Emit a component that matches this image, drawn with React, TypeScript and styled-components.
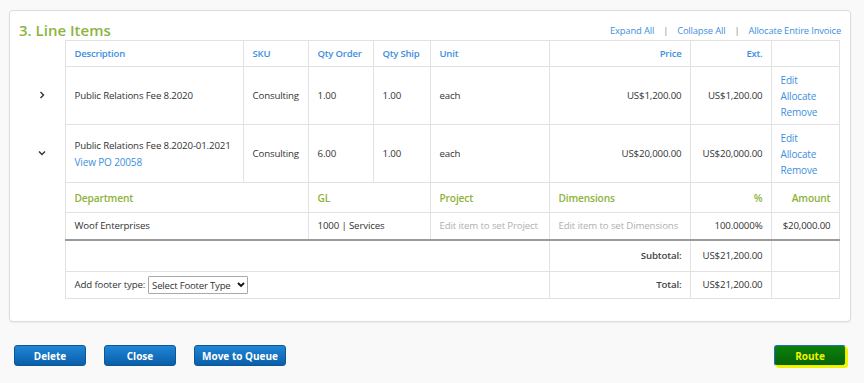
import React from 'react';
import styled, { createGlobalStyle } from 'styled-components';

const GlobalStyle = createGlobalStyle`
  html, body { margin: 0; padding: 0; background: #f9f9f9; }
  body { font-family: "Open Sans", "Liberation Sans", sans-serif; color: #333; }
  * { box-sizing: border-box; }
`;

const Page = styled.div`
  width: 864px;
  height: 383px;
  padding-top: 10px;
`;

const Card = styled.section`
  margin-left: 9px;
  width: 842px;
  height: 312px;
  background: #fff;
  border: 1px solid #dcdcdc;
  border-radius: 4px;
  box-shadow: 0 1px 2px rgba(0, 0, 0, 0.06);
  padding: 0 9px 0 9px;
`;

const TitleBar = styled.div`
  height: 29px;
  display: flex;
  justify-content: space-between;
  align-items: flex-end;
`;

const Title = styled.h2`
  margin: 0;
  font-size: 15px;
  line-height: 20px;
  font-weight: 600;
  color: #8cb43f;
`;

const Links = styled.div`
  display: flex;
  align-items: center;
  gap: 9px;
  font-size: 9.4px;
  line-height: 14px;
  padding-bottom: 2px;
  letter-spacing: -0.15px;
  white-space: nowrap;
`;

const Link = styled.a`
  color: #3d8fe0;
  text-decoration: none;
  cursor: pointer;
`;

const Sep = styled.span`
  color: #888;
`;

const Table = styled.table`
  border-collapse: collapse;
  table-layout: fixed;
  width: 820px;
  font-size: 9.7px;
  letter-spacing: -0.15px;
`;

const Row = styled.tr<{ $h: number; $heavy?: boolean }>`
  height: ${(p) => p.$h}px;
  & > td:not(:first-child), & > th:not(:first-child) {
    border-bottom: ${(p) => (p.$heavy ? '2px solid #9a9a9a' : '1px solid #e2e2e2')};
  }
`;

const Gutter = styled.td`
  border: none;
  padding: 0;
  text-align: center;
  vertical-align: middle;
`;

const HeadCell = styled.th<{ $align?: 'left' | 'right' }>`
  border: 1px solid #e2e2e2;
  padding: 0 8px 0 9px;
  font-size: 9.5px;
  font-weight: 600;
  letter-spacing: -0.2px;
  color: #3d8fe0;
  text-align: ${(p) => p.$align || 'left'};
  vertical-align: middle;
  white-space: nowrap;
  overflow: visible;
`;

const GreenHead = styled.td<{ $align?: 'left' | 'right' }>`
  border: 1px solid #e2e2e2;
  padding: 0 8px 0 9px;
  font-size: 10.2px;
  font-weight: 600;
  letter-spacing: -0.15px;
  color: #8db33a;
  text-align: ${(p) => p.$align || 'left'};
  vertical-align: middle;
  white-space: nowrap;
`;

const Cell = styled.td<{ $align?: 'left' | 'right'; $muted?: boolean; $strong?: boolean }>`
  border: 1px solid #e2e2e2;
  padding: 0 8px 0 9px;
  color: ${(p) => (p.$muted ? '#b0b0b0' : p.$strong ? '#444' : '#333')};
  font-weight: ${(p) => (p.$strong ? 600 : 400)};
  text-align: ${(p) => p.$align || 'left'};
  vertical-align: middle;
  line-height: 16px;
  white-space: nowrap;
  overflow: hidden;
`;

const Stack = styled.div`
  display: flex;
  flex-direction: column;
  line-height: 16px;
`;

const ActionLink = styled.a`
  color: #3d8fe0;
  text-decoration: none;
  font-size: 10px;
  cursor: pointer;
`;

const FooterLabel = styled.label`
  display: flex;
  align-items: center;
  gap: 3px;
  color: #333;
`;

const SelectWrap = styled.span`
  position: relative;
  display: inline-flex;
`;

const Select = styled.select`
  appearance: none;
  height: 18px;
  width: 100px;
  border: 1px solid #a9a9a9;
  border-radius: 1px;
  background: #fff;
  font-family: "Open Sans", "Liberation Sans", sans-serif;
  font-size: 9.6px;
  letter-spacing: -0.2px;
  color: #333;
  padding: 0 12px 0 3px;
`;

const SelectArrow = styled.svg`
  position: absolute;
  right: 3px;
  top: 6px;
  pointer-events: none;
`;

const ButtonBar = styled.div`
  display: flex;
  align-items: center;
  gap: 18px;
  margin-top: 23px;
  padding: 0 18px 0 14px;
`;

const Button = styled.button<{ $w: number }>`
  width: ${(p) => p.$w}px;
  height: 21px;
  border: 1px solid #0b5899;
  border-radius: 3px;
  background: linear-gradient(#1f86d6, #0a5ea8);
  color: #fff;
  font-family: "Open Sans", "Liberation Sans", sans-serif;
  font-weight: 700;
  font-size: 10px;
  padding: 0;
  cursor: pointer;
`;

const RouteButton = styled(Button)`
  margin-left: auto;
  background: linear-gradient(#0c800c, #066406);
  color: #f2f200;
  border-color: #1f6fc4 #e9ef00 #e9ef00 #1f6fc4;
  box-shadow: 2px 2px 0 #f3f300;
`;

const ChevronRight = () => (
  <svg width="8" height="8" viewBox="0 0 8 8">
    <path d="M2.5 1 L5.5 4 L2.5 7" fill="none" stroke="#333" strokeWidth="1.4" />
  </svg>
);

const ChevronDown = () => (
  <svg width="8" height="8" viewBox="0 0 8 8">
    <path d="M1 2.5 L4 5.5 L7 2.5" fill="none" stroke="#333" strokeWidth="1.4" />
  </svg>
);

const Actions = () => (
  <Stack>
    <ActionLink>Edit</ActionLink>
    <ActionLink>Allocate</ActionLink>
    <ActionLink>Remove</ActionLink>
  </Stack>
);

export default function App() {
  return (
    <Page>
      <GlobalStyle />
      <Card>
        <TitleBar>
          <Title>3. Line Items</Title>
          <Links>
            <Link>Expand All</Link>
            <Sep>|</Sep>
            <Link>Collapse All</Link>
            <Sep>|</Sep>
            <Link>Allocate Entire Invoice</Link>
          </Links>
        </TitleBar>
        <Table>
          <colgroup>
            <col style={{ width: 46 }} />
            <col style={{ width: 178 }} />
            <col style={{ width: 65 }} />
            <col style={{ width: 65 }} />
            <col style={{ width: 57 }} />
            <col style={{ width: 119 }} />
            <col style={{ width: 141 }} />
            <col style={{ width: 81 }} />
            <col style={{ width: 68 }} />
          </colgroup>
          <tbody>
            <Row $h={26}>
              <Gutter />
              <HeadCell>Description</HeadCell>
              <HeadCell>SKU</HeadCell>
              <HeadCell>Qty Order</HeadCell>
              <HeadCell>Qty Ship</HeadCell>
              <HeadCell>Unit</HeadCell>
              <HeadCell $align="right">Price</HeadCell>
              <HeadCell $align="right">Ext.</HeadCell>
              <HeadCell />
            </Row>
            <Row $h={58}>
              <Gutter><ChevronRight /></Gutter>
              <Cell>Public Relations Fee 8.2020</Cell>
              <Cell>Consulting</Cell>
              <Cell>1.00</Cell>
              <Cell>1.00</Cell>
              <Cell>each</Cell>
              <Cell $align="right">US$1,200.00</Cell>
              <Cell $align="right">US$1,200.00</Cell>
              <Cell><Actions /></Cell>
            </Row>
            <Row $h={58}>
              <Gutter><ChevronDown /></Gutter>
              <Cell>
                <Stack>
                  <span>Public Relations Fee 8.2020-01.2021</span>
                  <ActionLink>View PO 20058</ActionLink>
                </Stack>
              </Cell>
              <Cell>Consulting</Cell>
              <Cell>6.00</Cell>
              <Cell>1.00</Cell>
              <Cell>each</Cell>
              <Cell $align="right">US$20,000.00</Cell>
              <Cell $align="right">US$20,000.00</Cell>
              <Cell><Actions /></Cell>
            </Row>
            <Row $h={30}>
              <Gutter />
              <GreenHead colSpan={2}>Department</GreenHead>
              <GreenHead colSpan={2}>GL</GreenHead>
              <GreenHead>Project</GreenHead>
              <GreenHead>Dimensions</GreenHead>
              <GreenHead $align="right">%</GreenHead>
              <GreenHead $align="right">Amount</GreenHead>
            </Row>
            <Row $h={27} $heavy>
              <Gutter />
              <Cell colSpan={2}>Woof Enterprises</Cell>
              <Cell colSpan={2}>1000 | Services</Cell>
              <Cell $muted>Edit item to set Project</Cell>
              <Cell $muted>Edit item to set Dimensions</Cell>
              <Cell $align="right">100.0000%</Cell>
              <Cell $align="right">$20,000.00</Cell>
            </Row>
            <Row $h={32}>
              <Gutter />
              <Cell colSpan={5} />
              <Cell $align="right" $strong>Subtotal:</Cell>
              <Cell $align="right">US$21,200.00</Cell>
              <Cell />
            </Row>
            <Row $h={27}>
              <Gutter />
              <Cell colSpan={5}>
                <FooterLabel>
                  Add footer type:
                  <SelectWrap>
                    <Select defaultValue="">
                      <option value="">Select Footer Type</option>
                    </Select>
                    <SelectArrow width="8" height="6" viewBox="0 0 8 6">
                      <path d="M1 1 L4 4 L7 1" fill="none" stroke="#111" strokeWidth="1.8" />
                    </SelectArrow>
                  </SelectWrap>
                </FooterLabel>
              </Cell>
              <Cell $align="right" $strong>Total:</Cell>
              <Cell $align="right">US$21,200.00</Cell>
              <Cell />
            </Row>
          </tbody>
        </Table>
      </Card>
      <ButtonBar>
        <Button $w={72}>Delete</Button>
        <Button $w={72}>Close</Button>
        <Button $w={92}>Move to Queue</Button>
        <RouteButton $w={72}>Route</RouteButton>
      </ButtonBar>
    </Page>
  );
}
